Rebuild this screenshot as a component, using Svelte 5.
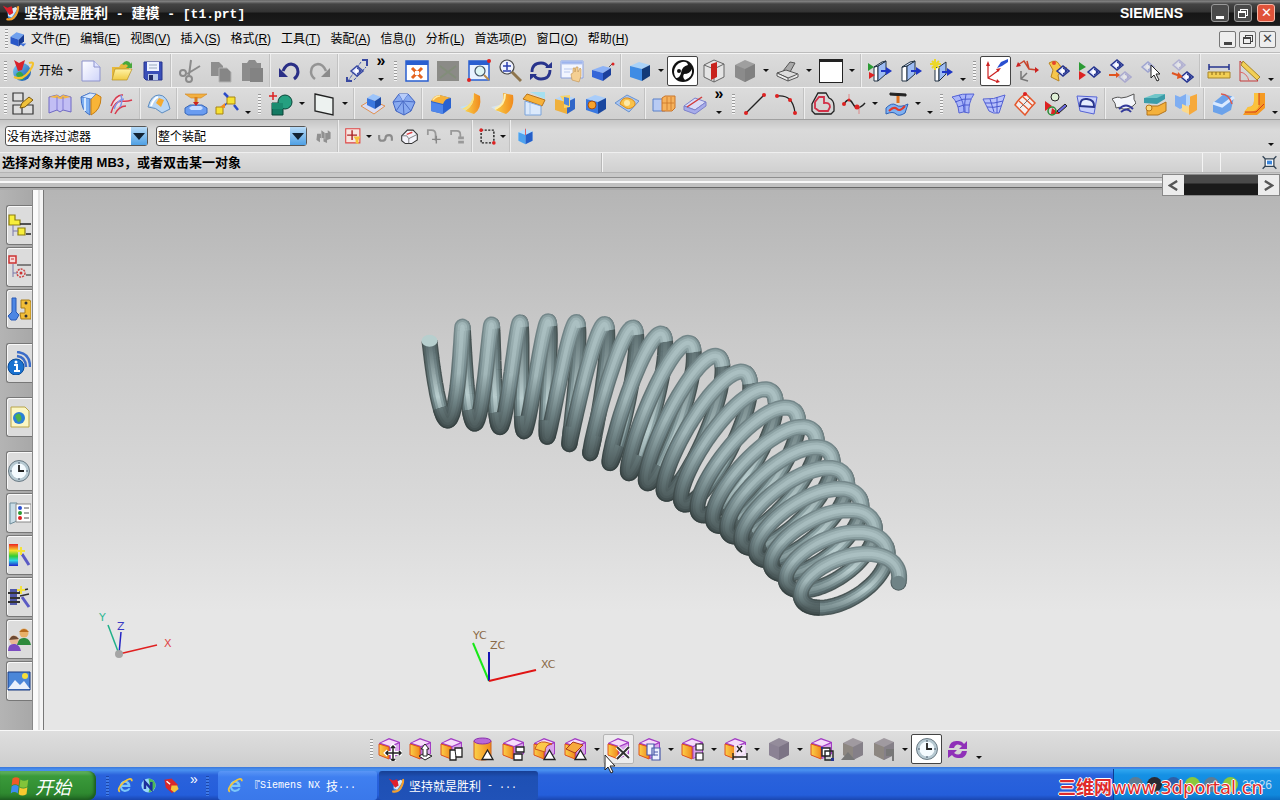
<script>
    const menus = [
        ["文件", "F"], ["编辑", "E"], ["视图", "V"], ["插入", "S"],
        ["格式", "R"], ["工具", "T"], ["装配", "A"], ["信息", "I"],
        ["分析", "L"], ["首选项", "P"], ["窗口", "O"], ["帮助", "H"],
    ];

    // ":" grip, "|" separator, "v" drop-down, "_" toolbar options, ">>" overflow, "*" pressed, "+" hovered
    const standardBar =
        "new open save | cut copy paste | undo redo | touch >> : fit grayfit zoomwin zoom rotate pan persp | cube v *shade section graycube v edges v white v | planein plane planenew _ : *wcs orient wcsdyn wcsplay wcsmove wcspick wcsset | ruler angle _".split(" ");
    const featureBar =
        ": sketch | extrude revolve sweep | patch | stamp assoc _ : combine v datum v | pad ball | block blendA blendB chamfer pocket hole boss | unite trim >> : line arc | offset spline v project v _ : mesh grid xmesh bridge nside | cloth layers fold | face bend _".split(" ");
    const selectBar = "gear | snap v loop body turn branch | marquee v | bluebox".split(" ");
    const syncBar =
        ": smove spull soffset scyl spattern sblend schamfer v +sdelete scopy v sgroup v sdim v sgray v sbox sgrayA sgrayB v *clock refresh _".split(" ");

    const sideTabs = [
        ["asmnav"], ["connav"], ["reuse"], ["web", true], ["internet", true],
        ["clock", true], ["material"], ["process"], ["machine"], ["roles"], ["scene"],
    ];

    const box = (t, l, r, line = "none") =>
        `<g stroke="${line}" stroke-width=".8" stroke-linejoin="round"><path d="M2 7 11 3 22 6 14 10z" fill="${t}"/><path d="M2 7 14 10V22L2 18z" fill="${l}"/><path d="M14 10 22 6V17L14 22z" fill="${r}"/></g>`;
    const hex = (t, l, r) =>
        `<path d="M12 1 22 5V18L12 23 2 18V6z" fill="${t}"/><path d="M2 6 12 10V23L2 18z" fill="${l}"/><path d="M12 10 22 5V18L12 23z" fill="${r}"/>`;
    const sync = (extra) =>
        `<path d="M1 6 11 1 22 5V17L12 22 1 18z" fill="#a23cc4"/><path d="M3 6 11 2.500 20 5.500 12 9z" fill="#f6dcfa"/><path d="M1 7 11 10V22L1 18z" fill="url(#orange)" stroke="#e0541c"/><path d="M12.500 10 21 6.500V16.500L12.500 21z" fill="#d9a4ea"/>${extra}`;
    const diamond = (x, y, c = "#26358f") =>
        `<path d="M${x - 6} ${y}l6-5 6 5-6 5z" fill="#dfe5ff" stroke="${c}" stroke-width="1.5"/><path d="M${x} ${y - 4}l5 4-5 4z" fill="${c}"/><circle cx="${x}" cy="${y}" r="2" fill="#fff"/>`;
    const tri = `<path d="M11 22.500 16.500 13 22 22.500z" fill="#fff" stroke="#222" stroke-width="1.300"/>`;
    const globe =
        `<circle cx="11" cy="13" r="9" fill="url(#sky)"/><path d="M5 15q4-5 7 0t-1 6q-5-1-6-6z" fill="#34a54b"/><path d="M3 1l5 3 6-3-3 10-4 1z" fill="#d8222c"/><path d="M3 18q10 5 18-10 3-6-3-4" fill="none" stroke="#f4c22d" stroke-width="2.200"/>`;
    const ie =
        `<path d="M19 14H7q1 4 5 4 3 0 4-2h3q-2 5-8 5-7-1-7-8t8-8q7 1 7 9zM7 11h8q-1-3-4-3t-4 3z" fill="#7cc6fa"/><path d="M4 21Q-1 17 10 7 21-1 21 6" fill="none" stroke="#f2c53c" stroke-width="2.500"/>`;

    const icons = {
        nx: globe,
        nxlogo: `<path d="M7 9l14-3q1 8-4 13-5 4-9-1z" fill="#3b8fe0"/><path d="M9 8l9-4 3 2-8 12-5-2z" fill="#d8ecfa"/><path d="M1 2l6 3 6-2 2 9-5 3z" fill="#e0202c"/><path d="M6 20q9 3 14-9 2-5 1-8" fill="none" stroke="#f5a02d" stroke-width="3"/>`,
        mdi: `<path d="M2 9l8-6 10 3-7 7z" fill="#6fa0ee"/><path d="M2 9l11 4v9L2 18z" fill="#2a58c8"/><path d="M13 13l7-7v9l-7 7z" fill="#173a94"/><path d="M14 18h9l-4 4z" fill="#3e70da"/>`,
        new: `<path d="M3 2h12l6 6v14H3z" fill="url(#page)" stroke="#8d93cc"/><path d="M15 2v6h6" fill="#dfe3ff" stroke="#8d93cc"/>`,
        open: `<path d="M2 8h7l2-3h8v5H6L2 20z" fill="#e7b93c"/><path d="M5 10h17l-5 11H2z" fill="url(#folder)" stroke="#b58f23" stroke-width=".7"/><path d="M12 5q5-6 9 0l1-2v6h-6l2-2q-2-3-4-1z" fill="#48a83c"/>`,
        save: `<path d="M3 3h18v18H5l-2-2z" fill="#3a4fb8" stroke="#26348f"/><path d="M6 3h12v9H6z" fill="#eef3ff"/><path d="M8 6h8M8 9h8" stroke="#9ab"/><path d="M7 15h10v6H7z" fill="#b8c8e8"/><path d="M8 16h4v5H8z" fill="#222c66"/>`,
        cut: `<path d="M13 1 11 16M22 7 9 15" stroke="#8b8b8b" stroke-width="2" fill="none"/><circle cx="5" cy="14" r="3" fill="none" stroke="#8b8b8b" stroke-width="2"/><circle cx="11" cy="20" r="3" fill="none" stroke="#8b8b8b" stroke-width="2"/>`,
        copy: `<path d="M2 3h8l4 4v10H2z" fill="#8e8e8e"/><path d="M10 9h8l4 4v10H10z" fill="#868686" stroke="#b4b4b4"/>`,
        paste: `<path d="M2 4h5l2-3h6l2 3h4v18H2z" fill="#8c8c8c"/><path d="M10 9h13v14H10z" fill="#838383"/>`,
        undo: `<path d="M6 12Q9 5 14 5q7 1 7 8 0 4-4 7" fill="none" stroke="#2a2f86" stroke-width="3"/><path d="M2 9v9h9z" fill="#2a2f86"/>`,
        redo: `<path d="M18 12Q15 5 10 5 3 6 3 13q0 4 4 7" fill="none" stroke="#949494" stroke-width="2.500"/><path d="M22 9v9h-9z" fill="#8a8a8a"/>`,
        touch: `<path d="M3 22 16 3M9 21 21 8" stroke="#4058b0" stroke-dasharray="3 1"/>${diamond(12, 12, "#3949a0")}<path d="M17 1h5v6M2 18v4h5" stroke="#3949a0" stroke-width="2" fill="none"/>`,
        fit: `<path d="M1 2h22v20H1z" fill="#fff" stroke="#2a5fd0" stroke-width="1.500"/><path d="M1 2h22v4H1z" fill="#2a5fd0"/><path d="M7 9l10 10M17 9 7 19" stroke="#e5641e" stroke-width="3"/><path d="M10 12h4v4h-4z" fill="#fff"/>`,
        grayfit: `<path d="M1 2h22v20H1z" fill="#8b8b87"/><path d="M4 7l16 12M20 7 4 19" stroke="#828d7a" stroke-width="2"/>`,
        zoomwin: `<path d="M2 2h20v19H2z" fill="#e9f2ff" stroke="#2a5fd0" stroke-width="1.500"/><path d="M2 2h20v4H2z" fill="#2a5fd0"/><circle cx="13" cy="12" r="5" fill="#dff6f4" stroke="#456" stroke-width="1.200"/><path d="M17 16l5 5" stroke="#b98b4a" stroke-width="2"/><circle cx="22" cy="2" r="2" fill="#d22"/><circle cx="2" cy="21" r="2" fill="#d22"/>`,
        zoom: `<circle cx="9" cy="8" r="7" fill="#eef2ff" stroke="#444" stroke-width="1.200"/><path d="M5 7h8M9 3v8M5 12h8" stroke="#2b3fb0" stroke-width="1.500"/><path d="M14 13l9 9" stroke="#8d744c" stroke-width="3"/>`,
        rotate: `<path d="M3 13Q3 4 12 4q5 0 7 4M21 11q0 9-9 9-5 0-7-4" fill="none" stroke="#28348c" stroke-width="2.800"/><path d="M16 9h7V3zM8 15H1v6z" fill="#28348c"/>`,
        pan: `<path d="M1 2h22v17H1z" fill="#f2f5ff" stroke="#8ba0dc"/><path d="M1 2h22v3H1zM4 10h8M4 13h6" fill="#9db4ee" stroke="#b9c8ee"/><path d="M12 21l-1-6 2-1V9h2v4l1-5h2v5l2-4 1 1v7l-2 6z" fill="#f4cf93" stroke="#c1904e" stroke-width=".6"/>`,
        persp: `<path d="M1 11l11-4 8 2-8 5z" fill="#8db2f6"/><path d="M1 11l11 3v8L1 18z" fill="#3566d8"/><path d="M12 14l8-5v7l-8 6z" fill="#1b3f9c"/><path d="M18 8l3-3" stroke="#555"/><circle cx="22" cy="5" r="1.500" fill="#d22"/>`,
        cube: box("#a9d2f8", "#3f8ce4", "#123a78"),
        shade: `<circle cx="12" cy="12" r="11" fill="#111"/><path d="M11 3q5-1 6 3-6 1-7 8-1 5-5 5-4-6 0-12 2-3 6-4z" fill="#fff"/><path d="M13 15q6 0 8-5 1 8-7 11-3-3-1-6z" fill="#fff"/><circle cx="8" cy="12" r="2" fill="#111"/>`,
        section: `<path d="M12 1 22 5V18L12 23 2 18V6z" fill="#e4e4e4" stroke="#666"/><path d="M2 6l10 4 10-5M12 10v13" stroke="#666" fill="none"/><path d="M9 5l6-2v15l-6 3z" fill="#c8221c"/>`,
        graycube: hex("#9f9f9f", "#8b8b8b", "#808080"),
        edges: `<path d="M7 12 14 3l5 1-5 9z" fill="#a9a9a9" stroke="#555"/><path d="M1 14l9-3 12 4-10 4z" fill="#ddd" stroke="#555"/><path d="M1 14v3l11 5v-3zM22 15v3l-10 4" fill="#eee" stroke="#555"/>`,
        plane: `<path d="M3 8l5-1v15H3z" fill="#fff" stroke="#234"/><path d="M8 7l8-5v13l-8 7z" fill="#9dbcf4" stroke="#234"/><path d="M3 8l8-5 5-1-8 5z" fill="#d8e6ff" stroke="#234"/><path d="M12 12h7" stroke="#1d35c4" stroke-width="2"/><path d="M17 8l6 4-6 4z" fill="#1d35c4"/>`,
        planein: `<path d="M6 8l4-1v15H6z" fill="#fff" stroke="#234"/><path d="M10 7l8-5v13l-8 7z" fill="#9dbcf4" stroke="#234"/><path d="M6 8l8-5 4-1-8 5z" fill="#d8e6ff" stroke="#234"/><path d="M13 12h6" stroke="#1d35c4" stroke-width="2"/><path d="M18 8l6 4-6 4z" fill="#1d35c4"/><path d="M0 4l6 4-6 4z" fill="#2b9a34"/><path d="M1 13l6 3-6 4z" fill="#d22"/>`,
        planenew: `<path d="M5 9l4-1v14H5z" fill="#fff" stroke="#234"/><path d="M9 8l7-5v12l-7 7z" fill="#9dbcf4" stroke="#234"/><path d="M12 13h7" stroke="#1d35c4" stroke-width="2"/><path d="M17 9l6 4-6 4z" fill="#1d35c4"/><path d="M5 0v11M0 5h11M2 2l7 7M9 2 2 9" stroke="#ecd829" stroke-width="2"/>`,
        wcs: `<path d="M4 5v14l10 4M4 19l11-8" fill="none" stroke="#c22" stroke-width="1.200"/><path d="M2 7l2-5 2 5zM12 10l5-1-3 4zM12 24l4-1-3-3z" fill="#c22"/><path d="M13 9l4-6 7-3v3l-6 4z" fill="#2a4fd0"/>`,
        orient: `<path d="M3 6l6-4 5 8 8 1M12 2l2 8" fill="none" stroke="#c8442c" stroke-width="1.500"/><path d="M1 8l2-5 3 4zM20 8l4 3-4 3z" fill="#c22"/><path d="M6 12v8l7 2M6 20l6-6" stroke="#777" fill="none" stroke-width="1.500"/>`,
        wcsdyn: `<path d="M3 4q8-5 11 3l7 2-9 7 1 6-8-4 2-7z" fill="#f6c64b" stroke="#b98421"/>${diamond(17, 12)}<circle cx="8" cy="4" r="2" fill="#e6452c"/>`,
        wcsplay: `<path d="M2 3l7 5-7 4z" fill="#2b9a34"/><path d="M2 12l7 4-7 5z" fill="#d22"/>${diamond(17, 13)}`,
        wcsmove: `${diamond(9, 6)}<g opacity=".45">${diamond(17, 18, "#7a78c8")}</g><path d="M1 16h8" stroke="#e05420" stroke-width="2"/><path d="M8 13l4 3-4 3z" fill="#e05420"/>`,
        wcspick: `<g opacity=".45">${diamond(9, 8, "#5a68c8")}</g><path d="M12 6v13l3-3 3 6 2-1-3-6h4z" fill="#fff" stroke="#222"/>`,
        wcsset: `<g opacity=".4">${diamond(9, 6, "#7a78c8")}</g>${diamond(17, 18)}<path d="M2 14l8 3" stroke="#e05420" stroke-width="2"/><path d="M8 13l5 5-6 2z" fill="#e05420"/>`,
        ruler: `<path d="M1 13h22v6H1z" fill="#f2cf55" stroke="#a8862a"/><path d="M2 5v6M22 5v6M2 8h20" stroke="#26348f" stroke-width="1.500"/><path d="M5 13v3M9 13v3M13 13v3M17 13v3" stroke="#86671a"/>`,
        angle: `<path d="M2 2v20h18z" fill="none" stroke="#c23a3a"/><path d="M5 2l17 16-3 3L3 6z" fill="#f2cf55" stroke="#a8862a"/><path d="M2 13q7 1 9 9" fill="none" stroke="#d66"/>`,
        sketch: `<path d="M2 1h10v8H2zM2 13h9v9H2zM11 13h11v9H11z" fill="#dedede" stroke="#333" stroke-width="1.200"/><path d="M9 16l2-5 7-6 4 3-8 7z" fill="#f0c13a" stroke="#7c5a10"/>`,
        extrude: `<path d="M1 5l8-2 3 2 3-2 8 2v15l-8-2-3 2-3-2-8 3z" fill="#c2bef4" stroke="#6e68c4"/><path d="M1 5l8-2 3 2 3-2 8 2-9 2z" fill="#f3b744"/><path d="M9 5v13M15 5v13" stroke="#817bd4"/>`,
        revolve: `<path d="M2 5l9-4v22Q2 19 2 5z" fill="#7eb0f2" stroke="#3c6dc4"/><path d="M12 5l5-3 5 3q0 13-10 18z" fill="#f8b437" stroke="#c67d14"/><path d="M2 5l9-4 6 1-5 5z" fill="#d6e8ff" stroke="#3c6dc4" stroke-width=".7"/><path d="M6 6v13" stroke="#d6e8ff" stroke-width="2"/>`,
        sweep: `<path d="M1 21Q3 7 10 4q3 5 12 4-8 2-10 5-7 1-11 8z" fill="#f3dce6"/><path d="M1 14Q6 2 13 3M1 21Q4 9 12 9q4 1 10-1M5 22q4-8 11-8" fill="none" stroke="#d8394d" stroke-width="1.500"/><path d="M4 17q3-9 10-10M11 3q2 7-1 12" stroke="#7f96e8" fill="none" stroke-width="1.500"/>`,
        patch: `<path d="M1 15Q4 3 12 3t11 14l-8 4q-6-6-14-6z" fill="#b9d6f4" stroke="#5d8cc0"/><path d="M9 11l3-5 5 2-3 7z" fill="#f4a92f"/><path d="M4 14q3-8 7-9" stroke="#fff" fill="none" stroke-width="2"/>`,
        stamp: `<path d="M1 2h22l-6 4H7z" fill="#f3b040" stroke="#cf8420" stroke-width=".6"/><path d="M12 5v7" stroke="#d97f1c" stroke-width="3"/><path d="M1 16l5-3h12l5 3v5l-4 2H4l-3-2z" fill="#6a9cf0" stroke="#3766b8"/><path d="M5 16l3-2h9l2 2-2 2H7z" fill="#c6dcff"/><path d="M9 10l3 4 3-4z" fill="#c22"/>`,
        assoc: `<path d="M5 18 16 7" stroke="#2c4cc8" stroke-width="1.500" stroke-dasharray="4 2"/><path d="M12 5h8v7h-8zM1 15h7v7H1z" fill="#f7e233" stroke="#a78412"/><path d="M9 1l4 4M19 13l4 5" stroke="#2c4cc8" stroke-width="2.500"/><path d="M5 15l5-4v5z" fill="#f28c1e"/>`,
        combine: `<path d="M3 11h11v12H3z" fill="#147a63" stroke="#0a4437"/><circle cx="16" cy="10" r="7" fill="#25a080" stroke="#0a4437"/><path d="M3 11h11v6H3z" fill="#1b8c70"/><path d="M4 0v8M0 4h8" stroke="#d22" stroke-width="1.500"/>`,
        datum: `<path d="M3 2l18 4v17L3 19z" fill="#edf2f0" stroke="#222" stroke-width="1.300"/>`,
        pad: `<path d="M0 14l10-6 14 6-11 8z" fill="#d9ddf4" stroke="#e09050"/><path d="M6 6l6-4 8 3-6 4z" fill="#9cc4fa"/><path d="M6 6l8 3v8l-8-4z" fill="#3b76de"/><path d="M14 9l6-4v8l-6 4z" fill="#1f4da8"/>`,
        ball: `<path d="M7 2h9l7 8-4 9-7 4-8-4-3-9z" fill="#88aaf0" stroke="#3f62c0"/><path d="M7 2l4 7-7 10M16 2l-5 7 8 10M1 10l10-1 12 1M11 9l1 14" fill="none" stroke="#4a6cc6"/><path d="M7 2h9l-5 7z" fill="#b7ccfa"/>`,
        block: `<path d="M2 9l8-6 12 3v10l-8 6-12-3z" fill="#2a62d0"/><path d="M2 9q3-6 9-6l11 3q-6 0-8 6z" fill="#f7b23a"/><path d="M2 10l12 3v9L2 19z" fill="#4f86ea"/><path d="M4 8q3-4 7-4" stroke="#ffe9a0" stroke-width="1.500" fill="none"/>`,
        blendA: `<path d="M0 15l8-2 9 4-8 4z" fill="#bfe0f8"/><path d="M14 1l6 3q2 13-6 18l-9-3Q15 13 14 1z" fill="url(#orange)"/><path d="M14 1q1 12-8 17l-4-1Q13 12 14 1z" fill="#fbe07a"/>`,
        blendB: `<path d="M0 15l8-2 9 4-8 4z" fill="#d6e4f0"/><path d="M12 1l10 2q2 13-7 19l-11-4Q14 14 12 1z" fill="url(#orange)"/><path d="M4 17q10-4 10-15" stroke="#fff0b0" stroke-width="2" fill="none"/>`,
        chamfer: `<path d="M8 0h15v7z" fill="#a6e0ef"/><path d="M1 7l4-5 18 6-3 6z" fill="#f7b23a" stroke="#b8741a"/><path d="M3 9l16 5v9H3z" fill="#dbe9fb" stroke="#7ba3da"/><path d="M8 11v11" stroke="#a9c6ec"/>`,
        pocket: box("#b5d6fa", "#efb03c", "#3166c8") + `<path d="M7 4l4 6v6l6-1V3z" fill="#f9d368"/><path d="M11 5l5 1v8l-5-2z" fill="#4f86dc"/>`,
        hole: box("#a9cdfa", "#3978e0", "#1a479f") + `<circle cx="8" cy="13" r="4" fill="#f7a32c" stroke="#a84f10"/>`,
        boss: `<path d="M0 11l12-8 12 6-10 11z" fill="#a9c6f2" stroke="#6992d0"/><path d="M5 12q2-7 8-6 8 2 7 7-4 5-9 3z" fill="#f9c24a" stroke="#d98a1c"/><circle cx="12" cy="11" r="3" fill="#fde9a8"/>`,
        unite: `<path d="M1 7h12v12H1z" fill="#b8cbf4" stroke="#5b80c8"/><path d="M10 6l3-2h10v12l-3 3H10z" fill="#f6b25c" stroke="#c9752a"/><path d="M15 5v13M10 11h12M19 5v13" stroke="#c9752a" stroke-width=".8"/>`,
        trim: `<path d="M1 14l11-8 11 4-11 8z" fill="#dadcf6" stroke="#7d82cc"/><path d="M1 14v4l11 4 11-8v-4l-11 8z" fill="#a7acea" stroke="#7d82cc"/><path d="M4 15 19 5" stroke="#d23b3b" stroke-width="1.500"/>`,
        line: `<path d="M3 21 21 3" stroke="#222" stroke-width="1.300"/><circle cx="3" cy="21" r="2" fill="#d22"/><circle cx="21" cy="3" r="2" fill="#d22"/>`,
        arc: `<path d="M3 4q16-2 18 17" fill="none" stroke="#222" stroke-width="1.300"/><circle cx="3" cy="4" r="2" fill="#d22"/><circle cx="16" cy="8" r="2" fill="#d22"/><circle cx="21" cy="21" r="2" fill="#d22"/>`,
        offset: `<path d="M7 1h8l3 5q5 2 5 8v5l-3 3H4l-3-3v-7z" fill="none" stroke="#222" stroke-width="1.300"/><path d="M8 5h5v6q6-1 6 4l-2 4H8l-4-3v-6z" fill="none" stroke="#d23048" stroke-width="1.800"/>`,
        spline: `<path d="M2 12q5-8 9 0t12-1" fill="none" stroke="#222" stroke-width="1.500"/><path d="M7 2v6M17 14v8" stroke="#d88"/><circle cx="2" cy="12" r="2" fill="#d22"/><circle cx="15" cy="15" r="2.500" fill="#d22"/><circle cx="7" cy="8" r="1.500" fill="#d22"/>`,
        project: `<path d="M5 1l16 1v2L5 3z" fill="#222" stroke="#222"/><path d="M13 4v7" stroke="#e0701e" stroke-width="3"/><path d="M1 16q6-6 10-3t12-1l-3 9q-6 4-9 1t-10 0z" fill="#7fb0f0" stroke="#2d62b8"/><path d="M4 19q5-5 8-2t8-3" stroke="#e03a2c" fill="none" stroke-width="2"/>`,
        mesh: `<path d="M1 5q10-4 22-3-6 9-5 19-6-2-10 0-1-11-7-16z" fill="#a9b5fa" stroke="#5563d4"/><path d="M4 10q8-4 16-3M7 15q6-3 11-2M8 3q5 7 5 17M15 2q-2 9-1 18" fill="none" stroke="#4a59d0"/>`,
        grid: `<path d="M1 7q10 1 22-4l-6 18q-6 1-10-2z" fill="#b9c2fb" stroke="#5563d4"/><path d="M3 11q9 1 18-2M5 15q7 1 14-1M8 7l4 13M15 5v16" fill="none" stroke="#4a59d0"/>`,
        xmesh: `<path d="M2 13q5-8 11-11l9 9q-5 5-10 12z" fill="#f4eeee" stroke="#e4572c" stroke-width="1.500"/><path d="M6 9l10 9M10 5l10 9" stroke="#e4572c" stroke-width="1.200"/><path d="M7 16 17 6" stroke="#777"/><circle cx="12" cy="2" r="2" fill="#d22"/>`,
        bridge: `<circle cx="11" cy="5" r="4" fill="#dff0d6" stroke="#222"/><path d="M1 9l7 5-7 5zM8 16l8 6H7z" fill="#d22"/><circle cx="8" cy="19" r="4" fill="none" stroke="#2b8a34" stroke-width="1.500"/><path d="M13 19l8-7 2 2-8 7z" fill="#6a6ae0" stroke="#222"/>`,
        nside: `<path d="M2 4l20 1-3 17-14-3z" fill="#c7cffb" stroke="#5563d4"/><path d="M5 14q0-8 7-7 8 1 7 8z" fill="#e6edff" stroke="#28348c" stroke-width="2"/>`,
        cloth: `<path d="M0 7q6-3 9-1 5 0 13-4-1 6 2 9-6 7-13 6-4-3-7-1 0-5-4-9z" fill="#f4f6fa" stroke="#555"/><path d="M7 17q7-7 14 0M9 20q6-5 10 0" fill="none" stroke="#333a9a" stroke-width="2"/>`,
        layers: `<path d="M1 6l11-4h10l-8 5z" fill="#6fc5c8"/><path d="M1 6h13l8-4v5l-8 5-13-1z" fill="#3b9ca8"/><path d="M4 14h11l8-4v9l-8 4H4z" fill="#f4b13c" stroke="#b4741a"/><circle cx="6" cy="16" r="3" fill="#f9d77c" stroke="#b4741a"/>`,
        fold: `<path d="M1 3l5 2 6-3v12l-6 3-5-3z" fill="#7faef2"/><path d="M8 12l7 3v7l-7-3z" fill="#fbd98c"/><path d="M15 15V5l8-3v16l-8 5z" fill="#f6a93b"/><path d="M12 2l4 2v9l-4 1z" fill="#b7d6fa"/>`,
        face: `<path d="M2 11 13 2l10 3-3 13-9 5-9-3z" fill="#6ba2ea"/><path d="M2 11l9 3 12-9" stroke="#d8e9ff" fill="none" stroke-width="3"/><path d="M10 2q8 0 11 10" fill="none" stroke="#de5a4c" stroke-width="1.500"/>`,
        bend: `<path d="M12 1h11v15l-8 7H1l5-8q6 0 6-6z" fill="#f59a23"/><path d="M12 1h5v12q-1 6-9 7H2l4-5q6 0 6-6z" fill="#fbc23c"/><path d="M3 20h11l8-8M17 1v12" stroke="#d23a1c" fill="none"/>`,
        gear: `<path d="M3 8h6V3l5 4h4V3l4 3v9l-5 2v4l-5-2v-5H7v6l-5-3z" fill="#909090"/><path d="M9 8v8M14 7v9" stroke="#c8c8c8"/>`,
        snap: `<path d="M1 1h20v20H1z" fill="#f7e5e0" stroke="#d44" stroke-width="1.500"/><path d="M10 3v14M3 10h14" stroke="#a22" stroke-width="2"/><path d="M12 12h10l-3 5v6l-4-2v-4z" fill="#f4c23c"/>`,
        loop: `<path d="M3 10v4q0 4 4 4 5 0 5-4t5-4q4 0 4 4v4" fill="none" stroke="#8b8b8b" stroke-width="3"/>`,
        body: `<path d="M1 11l8-8h8l6 6v8l-8 5H6l-5-4z" fill="#f3f3fa" stroke="#333" stroke-width="1.500"/><path d="M1 11h7l3 4 12-6M11 15v7" fill="none" stroke="#555"/><path d="M8 9l8-3" stroke="#d44" stroke-width="2"/>`,
        turn: `<path d="M4 10V3h5q6 0 6 6v9" fill="none" stroke="#999" stroke-width="2.500"/><path d="M10 16h12M16 11v11" stroke="#888" stroke-width="2"/>`,
        branch: `<path d="M3 10V4h8q5 0 5 5v4" fill="none" stroke="#999" stroke-width="2.500"/><path d="M13 12h8v4h-8zM13 18h8v4h-8z" fill="#999"/>`,
        marquee: `<path d="M3 3h18v18H3z" fill="none" stroke="#222" stroke-width="2" stroke-dasharray="3 2"/><circle cx="3" cy="3" r="2.500" fill="#d22"/><circle cx="21" cy="21" r="2.500" fill="#d22"/>`,
        bluebox: hex("#b9defb", "#4da2ee", "#245ec8") + `<path d="M12 1v9" stroke="#d66" stroke-width="1.500"/>`,
        smove: sync(`<path d="M15 9v15M8 16h15M13 11l2-2 2 2M13 22l2 2 2-2M10 14l-2 2 2 2M21 14l2 2-2 2" stroke="#fff" stroke-width="4" fill="none"/><path d="M15 9v15M8 16h15M13 11l2-2 2 2M13 22l2 2 2-2M10 14l-2 2 2 2M21 14l2 2-2 2" stroke="#222" stroke-width="1.500" fill="none"/>`),
        spull: sync(`<path d="M10 19l6-3 7 3-7 4z" fill="#fff" stroke="#222"/><path d="M16 7l4 5h-2v7h-4v-7h-2z" fill="#fff" stroke="#222"/>`),
        soffset: sync(`<path d="M10 13h5v-2h7v9h-6v3h-6z" fill="#fff" stroke="#222" stroke-width="1.300"/><path d="M15 13l1 7" stroke="#222"/>`),
        scyl: `<path d="M3 4v16q0 3 8 3t9-3V4z" fill="url(#orange)" stroke="#cf641c"/><ellipse cx="11.500" cy="4" rx="8.500" ry="3" fill="#b869d8" stroke="#8a2fae"/>${tri}`,
        spattern: sync(`<path d="M14 10h8v5h-8zM12 17h8v6h-8z" fill="#fff" stroke="#222" stroke-width="1.300"/>`),
        sblend: sync(`<path d="M2 12q2-8 10-7l7 2q-7 0-7 8z" fill="#fbc84a" stroke="#c8561c"/>` + tri),
        schamfer: sync(`<path d="M2 12l7-7 10 3-8 8z" fill="#f6a93b" stroke="#a83a1c"/>` + tri),
        sdelete: sync(`<path d="M10 10l12 11M22 10 10 22" stroke="#fff" stroke-width="4"/><path d="M10 10l12 11M22 10 10 22" stroke="#333" stroke-width="2"/>`),
        scopy: sync(`<path d="M9 7h7v11H9zM14 11h8v12h-8z" fill="#eef2ff" stroke="#4a59a8" stroke-width="1.200"/><path d="M16 15h4M16 18h4" stroke="#4a59a8"/>`),
        sgroup: sync(`<path d="M15 7h7v6h-7zM15 16h7v7h-7z" fill="#fff" stroke="#222" stroke-width="1.200"/>`),
        sdim: sync(`<path d="M10 8h12v15H10z" fill="#fff" opacity=".75"/><path d="M13 9l5 6M18 9l-5 6M9 16v7M23 16v7M9 20h14" stroke="#222" stroke-width="1.300"/>`),
        sgray: hex("#948c9b", "#8b8294", "#7c7485"),
        sbox: sync(`<path d="M12 11h8v8h-8z" fill="#fff" stroke="#222" stroke-width="1.400"/><path d="M15 14h8v9h-8z" fill="none" stroke="#222" stroke-width="1.400"/><path d="M11 10h2v2h-2zM21 21h3v3h-3z" fill="#26348f"/>`),
        sgrayA: hex("#a09aa0", "#8d8781", "#858088") + `<path d="M0 23l7-8 7 8z" fill="#777"/>`,
        sgrayB: hex("#a09aa0", "#8d8781", "#858088") + `<path d="M14 12h8v12h-2v-5h-6z" fill="#777"/>`,
        clock: `<circle cx="12" cy="12" r="10.500" fill="#b6c9d2" stroke="#6a7a84"/><circle cx="12" cy="12" r="7.500" fill="#f4fbff"/><path d="M12 6v6h5" fill="none" stroke="#222" stroke-width="1.800"/><path d="M12 3v2M12 19v2M3 12h2M19 12h2" stroke="#456"/>`,
        refresh: `<path d="M3 11Q4 3 12 4q4 0 6 3l3-3v8h-8l3-3q-6-4-8 2zM21 14q-1 8-9 7-4 0-6-3l-4 3v-8h9l-3 3q6 4 8-2z" fill="#8f30b8"/>`,
        asmnav: `<path d="M2 2h6v5h5v5H2zM11 15h7v7h-7z" fill="#f7ee3a" stroke="#8c7d10" stroke-width="1.200"/><path d="M6 12v11M6 18h5" stroke="#7a78a8" fill="none"/><path d="M13 11h11M19 21h5" stroke="#222" stroke-width="1.500"/>`,
        connav: `<path d="M2 1h7v7H2z" fill="#f7dada" stroke="#c33" stroke-width="1.500"/><path d="M4 4h3" stroke="#c33"/><circle cx="14" cy="18" r="4" fill="none" stroke="#c44" stroke-width="1.500" stroke-dasharray="2 1"/><circle cx="14" cy="18" r="1.500" fill="#c33"/><path d="M6 9v13M6 18h4" stroke="#7a78a8"/><path d="M10 10h14M19 20h5" stroke="#222" stroke-width="1.200"/>`,
        reuse: `<path d="M5 1h4v14l3 3-3 5H4l-3-4 4-4z" fill="#4c86e4" stroke="#2858b4"/><path d="M14 3h8q2 0 2 3v16H14l-1-6h5v-5h-4z" fill="#f2be38" stroke="#a87c18"/><circle cx="19" cy="6" r="1.500" fill="#333"/><circle cx="19" cy="19" r="1.500" fill="#333"/>`,
        web: `<circle cx="9" cy="16" r="8" fill="#1a72d0" stroke="#0c4a94"/><path d="M7 14h3v5M7 20h6" stroke="#fff" stroke-width="2" fill="none"/><circle cx="9" cy="11" r="1.500" fill="#fff"/><path d="M10 5q9 1 9 11M10 1q13 1 13 15" fill="none" stroke="#3b6cc8" stroke-width="2.500"/>`,
        internet: `<path d="M4 2h14l4 4v16H4z" fill="#fbf6c4" stroke="#b9a54a"/><circle cx="12" cy="13" r="6" fill="#2c7fd8"/><path d="M8 11q4-5 6 0t-3 6z" fill="#4cb24a"/>`,
        material: `<path d="M3 2h7v18l-7 3z" fill="#c9dce6" stroke="#6e8c9a"/><path d="M9 3h15v18H9z" fill="#fff" stroke="#888"/><circle cx="13" cy="7" r="2" fill="#2a4fd0"/><circle cx="13" cy="12" r="2" fill="#2b9a34"/><circle cx="13" cy="17" r="2" fill="#d22"/><path d="M17 7h5M17 12h5M17 17h5" stroke="#555"/>`,
        process: `<path d="M2 1h9v22H2z" fill="url(#rainbow)"/><path d="M15 11l7 11" stroke="#5a5ac4" stroke-width="3"/><path d="M14 4v8M10 8h8" stroke="#f4e33a" stroke-width="2"/>`,
        machine: `<path d="M3 4h7v16H3z" fill="#5058a8"/><path d="M1 8h13M3 13h10M1 17h12" stroke="#333" stroke-width="2"/><path d="M15 12l7 10" stroke="#5a5ac4" stroke-width="3"/><path d="M12 6l9-2M13 11l9-2" stroke="#333" stroke-width="1.500"/><path d="M14 1v8M10 5h8" stroke="#f4e33a" stroke-width="2"/>`,
        roles: `<circle cx="17" cy="6" r="4.500" fill="#e8b068"/><path d="M10 18q1-8 8-7 5 1 6 7z" fill="#2e8a3c"/><path d="M12 5q5-6 10 0z" fill="#b56a1e"/><circle cx="7" cy="13" r="4.500" fill="#e9b894"/><path d="M1 24q0-8 7-7 5 1 6 7z" fill="#7b4cc0"/><path d="M2 13q4-8 10-1z" fill="#6c4a33"/>`,
        scene: `<path d="M1 3h22v18H1z" fill="#4a86d8" stroke="#1b3a80"/><path d="M1 20l7-9 5 5 4-4 6 8z" fill="#e8f0fb"/><circle cx="18" cy="7" r="3" fill="#f6df3a"/>`,
        winflag: `<path d="M4 4q4-3 8 0l-1 8q-4-3-8 0z" fill="#ef5a28"/><path d="M13 5q4 3 9 0l-1 8q-5 3-9 0z" fill="#82c43a"/><path d="M3 13q4-3 8 0l-1 8q-4-3-8 0z" fill="#3c8df0"/><path d="M12 14q4 3 9 0l-1 8q-5 3-9 0z" fill="#f8c92f"/>`,
        ie,
        media: `<circle cx="12" cy="12" r="10" fill="#9ad8fa"/><path d="M12 2a10 10 0 0 1 10 10q-2 9-10 10l2-8z" fill="#4cb85a"/><path d="M7 17V7l9 10V7" fill="none" stroke="#1c2f9c" stroke-width="3.500"/>`,
        cards: `<path d="M2 4l10-2 9 9-8 12-9-8z" fill="#d8282c"/><path d="M12 12h8l2 5-6 5-5-4z" fill="#f2c53c"/><path d="M5 6l5 4" stroke="#fff" stroke-width="2"/>`,
        fullscreen: `<path d="M5 6h14v12H5z" fill="#fff" stroke="#345" stroke-width="2"/><path d="M8 9h8v6H8z" fill="#3b86dc"/><path d="M1 2l4 4M23 2l-4 4M1 22l4-4M23 22l-4-4" stroke="#345" stroke-width="2"/>`,
    };

    // [turn, centre x, centre y, radius, tilt in degrees, foreshortening]
    const keys = [
        [-1, 420, 375, 46, -2, -0.12],
        [0, 455, 374, 47, 0, -0.08],
        [4, 561, 380, 59, 8, 0.02],
        [8, 658, 408, 72, 20, 0.15],
        [12, 746, 461, 70, 37, 0.31],
        [16, 808, 525, 58, 54, 0.43],
        [19, 850, 583, 49, 66, 0.54],
        [20, 862, 603, 46, 69, 0.56],
    ];

    function at(s, col) {
        let i = 1;
        while (i < keys.length - 2 && keys[i + 1][0] < s) i++;
        if (s < keys[1][0]) i = 0;
        const a = keys[i];
        const b = keys[i + 1];
        const before = keys[Math.max(0, i - 1)];
        const after = keys[Math.min(keys.length - 1, i + 2)];
        const span = b[0] - a[0];
        const t = (s - a[0]) / span;
        const slope = (b[col] - a[col]) / span;
        const m0 = (i === 0 ? slope : (b[col] - before[col]) / (b[0] - before[0])) * span;
        const m1 = ((after[col] - a[col]) / (after[0] - a[0])) * span;
        const t2 = t * t;
        const t3 = t2 * t;
        return (
            (2 * t3 - 3 * t2 + 1) * a[col] + (t3 - 2 * t2 + t) * m0 +
            (3 * t2 - 2 * t3) * b[col] + (t3 - t2) * m1
        );
    }

    function point(s) {
        const k = s + 0.25;
        const phi = s * Math.PI * 2;
        const tilt = (at(k, 4) * Math.PI) / 180;
        const u = Math.cos(phi) * at(k, 3);
        const v = Math.sin(phi) * at(k, 3) * at(k, 5);
        const x = at(k, 1) + u * Math.sin(tilt) + v * Math.cos(tilt);
        const y = at(k, 2) - u * Math.cos(tilt) + v * Math.sin(tilt);
        return [x.toFixed(1), y.toFixed(1)];
    }

    function strand(from, to) {
        const points = [];
        for (let n = 0; n <= 40; n++) points.push(point(from + ((to - from) * n) / 40).join(" "));
        return "M" + points.join("L");
    }

    // far halves first, then near halves, each from the left end on;
    // a near half reaches round both tips so that the bends stay in one piece
    const first = -0.88;
    const last = 19.07;
    const coil = [];
    for (let i = 0; i <= 19; i++) {
        coil.push({ side: "far", d: strand(i === 0 ? first : i - 1, i - 0.45) });
    }
    for (let i = 0; i <= 19; i++) {
        coil.push({ side: "near", d: strand(i - 0.62, i === 19 ? last : i + 0.07) });
    }
    const startCap = point(first);
    const endCap = point(last);
</script>

{#snippet icon(name)}
    <svg class="icon" viewBox="0 0 24 24" aria-hidden="true">{@html icons[name]}</svg>
{/snippet}

{#snippet tools(items)}
    {#each items as item}
        {#if item === ":"}
            <span class="grip"></span>
        {:else if item === "|"}
            <span class="sep"></span>
        {:else if item === "v"}
            <button class="drop" aria-label="more"></button>
        {:else if item === "_"}
            <button class="drop low" aria-label="options"></button>
        {:else if item === ">>"}
            <button class="drop low wide" aria-label="overflow"><span>»</span></button>
        {:else if item === "white"}
            <button class="tool" aria-label="background"><span class="swatch"></span></button>
        {:else}
            {@const name = item.replace(/[*+]/, "")}
            <button class="tool" class:pressed={item[0] === "*"} class:hovered={item[0] === "+"} aria-label={name}>
                {@render icon(name)}
            </button>
        {/if}
    {/each}
{/snippet}

<svg class="defs" aria-hidden="true">
    <defs>
        <linearGradient id="orange"><stop stop-color="#fbd04a" /><stop offset="1" stop-color="#f08a1c" /></linearGradient>
        <linearGradient id="page" x2="1" y2="1"><stop stop-color="#fff" /><stop offset="1" stop-color="#cfd4fa" /></linearGradient>
        <linearGradient id="folder" x2="0" y2="1"><stop stop-color="#fff3a6" /><stop offset="1" stop-color="#f0cb45" /></linearGradient>
        <linearGradient id="sky" x2="1" y2="1"><stop stop-color="#7fd0f8" /><stop offset="1" stop-color="#0f4ea8" /></linearGradient>
        <linearGradient id="rainbow" x2="0" y2="1">
            <stop stop-color="#e22" /><stop offset=".3" stop-color="#f6e22c" /><stop offset=".55" stop-color="#3c3" />
            <stop offset=".75" stop-color="#2cd6e6" /><stop offset="1" stop-color="#22c" />
        </linearGradient>
        <linearGradient id="near-edge" x2="0" y2="1"><stop stop-color="#74878a" /><stop offset=".6" stop-color="#5a6a6b" /><stop offset="1" stop-color="#374242" /></linearGradient>
        <linearGradient id="near-body" x2="0" y2="1"><stop stop-color="#8ca1a3" /><stop offset=".6" stop-color="#71868a" /><stop offset="1" stop-color="#435051" /></linearGradient>
        <linearGradient id="near-light" x2="0" y2="1"><stop stop-color="#a0b5b7" /><stop offset=".5" stop-color="#8da2a4" /><stop offset=".8" stop-color="#66787a" /><stop offset="1" stop-color="#4c5a5b" /></linearGradient>
        <linearGradient id="near-shine" x2="0" y2="1"><stop stop-color="#abc0c2" /><stop offset=".5" stop-color="#a2b7b9" /><stop offset=".8" stop-color="#6e8284" /><stop offset="1" stop-color="#526162" /></linearGradient>
        <linearGradient id="far-edge" x2="0" y2="1"><stop stop-color="#465252" /><stop offset="1" stop-color="#4a5757" /></linearGradient>
        <linearGradient id="far-body" x2="0" y2="1"><stop stop-color="#4f5f60" /><stop offset=".7" stop-color="#6b7f81" /><stop offset="1" stop-color="#56676a" /></linearGradient>
        <linearGradient id="far-light" x2="0" y2="1"><stop stop-color="#56676a" /><stop offset=".7" stop-color="#93a9ab" /><stop offset="1" stop-color="#6d8183" /></linearGradient>
        <linearGradient id="far-shine" x2="0" y2="1"><stop stop-color="#5a6c6e" /><stop offset=".7" stop-color="#b9cdce" /><stop offset="1" stop-color="#7d9193" /></linearGradient>
    </defs>
</svg>

<div class="app">
    <header class="titlebar">
        {@render icon("nxlogo")}
        <h1>坚持就是胜利<span>{" - "}</span>建模<span>{" - [t1.prt]"}</span></h1>
        <strong>SIEMENS</strong>
        <div class="winbtns">
            <button class="min" aria-label="minimize"></button>
            <button class="restore" aria-label="restore"><i></i></button>
            <button class="close" aria-label="close">✕</button>
        </div>
    </header>

    <nav class="menubar">
        <span class="grip"></span>
        {@render icon("mdi")}
        {#each menus as [label, key]}
            <button>{label}(<u>{key}</u>)</button>
        {/each}
        <div class="winbtns mdi">
            <button class="min" aria-label="minimize part"></button>
            <button class="restore" aria-label="restore part"><i></i></button>
            <button aria-label="close part">✕</button>
        </div>
    </nav>

    <div class="toolbar">
        <span class="grip first"></span>
        <button class="start-app">{@render icon("nx")}开始<i></i></button>
        {@render tools(standardBar)}
    </div>
    <div class="toolbar second">
        {@render tools(featureBar)}
    </div>

    <div class="selectbar">
        <div class="combo">
            <select aria-label="类型过滤器"><option>没有选择过滤器</option></select>
            <span></span>
        </div>
        <div class="combo">
            <select aria-label="选择范围"><option>整个装配</option></select>
            <span></span>
        </div>
        {@render tools(selectBar)}
        <button class="drop low end" aria-label="options"></button>
    </div>

    <div class="status">
        <p>选择对象并使用 MB3，或者双击某一对象</p>
        <p class="message"></p>
        <span></span>
        <button aria-label="fullscreen">{@render icon("fullscreen")}</button>
    </div>

    <div class="strip">
        <div class="scroller">
            <button aria-label="left"><svg viewBox="0 0 12 12"><path d="M10 1 2 6l8 5" /></svg></button>
            <span></span>
            <button aria-label="right"><svg viewBox="0 0 12 12"><path d="M2 1l8 5-8 5" /></svg></button>
        </div>
    </div>

    <main>
        <aside>
            {#each sideTabs as [name, spaced]}
                <button class:spaced aria-label={name}>{@render icon(name)}</button>
            {/each}
        </aside>
        <div class="divider"></div>
        <div class="view">
            <svg viewBox="44 190 1236 540">
                <circle cx={endCap[0]} cy={endCap[1]} r="8" fill="#4f5e60" />
                <g fill="none" stroke-linejoin="round">
                    {#each coil as { side, d }}
                        <path {d} stroke="url(#{side}-edge)" stroke-width="16" />
                        <path {d} stroke="url(#{side}-body)" stroke-width="13" />
                        <path {d} stroke="url(#{side}-light)" stroke-width="9" />
                        <path {d} stroke="url(#{side}-shine)" stroke-width="4" />
                    {/each}
                </g>
                <ellipse cx={startCap[0]} cy={startCap[1]} rx="8" ry="6" fill="#b7cfce" />
                <circle cx={endCap[0]} cy={endCap[1]} r="7" fill="#6f8386" />

                <g fill="none" stroke-width="1.5">
                    <path d="M119 654 108 625" stroke="#1fb088" />
                    <path d="M119 654 121 632" stroke="#2424c4" />
                    <path d="M119 654 157 645" stroke="#e02020" />
                    <path d="M489 681 473 643" stroke="#18e818" stroke-width="2" />
                    <path d="M489 681V652" stroke="#1414b4" stroke-width="2" />
                    <path d="M489 681 536 670" stroke="#e01414" stroke-width="2" />
                </g>
                <circle cx="119" cy="654" r="4" fill="#a5a5a5" />
                <g class="axis">
                    <text x="99" y="621" fill="#2fb892">Y</text>
                    <text x="117" y="630" fill="#3a3ac4">Z</text>
                    <text x="164" y="647" fill="#e04848">X</text>
                    <text x="473" y="639">YC</text>
                    <text x="490" y="649">ZC</text>
                    <text x="541" y="668">XC</text>
                </g>
            </svg>
        </div>
    </main>

    <div class="syncbar">
        {@render tools(syncBar)}
        <svg class="cursor" viewBox="0 0 12 20" aria-hidden="true">
            <path d="M1 1v15l3-3 3 6 2-1-3-6h5z" fill="#fff" stroke="#222" />
        </svg>
    </div>

    <footer>
        <button class="start">{@render icon("winflag")}开始</button>
        <div class="quick">
            <span class="grip"></span>
            <button aria-label="ie">{@render icon("ie")}</button>
            <button aria-label="media">{@render icon("media")}</button>
            <button aria-label="cards">{@render icon("cards")}</button>
            <b>»</b>
            <span class="grip"></span>
        </div>
        <button class="task">{@render icon("ie")}『<span>{"Siemens NX "}</span>技<span>...</span></button>
        <button class="task active">{@render icon("nxlogo")}坚持就是胜利<span>{" - ..."}</span></button>
        <div class="tray">
            <i class="gray"></i><i class="dark"></i><i></i><i class="green"></i><i class="gray"></i><i class="green"></i>
            <time>20:26</time>
            <div class="watermark">三维网<span>www.3dportal.cn</span></div>
        </div>
    </footer>
</div>

<style>
    :global(body) {
        margin: 0;
    }

    .app {
        display: flex;
        flex-direction: column;
        height: 100vh;
        overflow: hidden;
        background: #d6d6d6;
        color: #000;
        font: 12px/16px "Liberation Sans", "Noto Sans CJK SC", sans-serif;
    }

    .app * {
        box-sizing: border-box;
    }

    .defs {
        position: absolute;
        width: 0;
        height: 0;
    }

    button {
        padding: 0;
        border: 0;
        background: none;
        color: inherit;
        font: inherit;
        white-space: nowrap;
    }

    .icon {
        display: block;
        flex: none;
        width: 24px;
        height: 24px;
    }

    .titlebar {
        display: flex;
        flex: none;
        align-items: center;
        height: 26px;
        padding: 0 5px 0 2px;
        background: linear-gradient(#555 0, #888 1px, #444 4px, #333 12px, #161616 13px, #1c1c1c 25px, #444);
        color: #fff;
    }

    .titlebar > .icon {
        width: 18px;
        height: 18px;
        margin-right: 4px;
    }

    h1 {
        flex: 1;
        margin: 0;
        font: bold 14px/20px "Noto Sans CJK SC", sans-serif;
        white-space: pre;
    }

    h1 span {
        font: bold 13px/20px "Liberation Mono", monospace;
    }

    .titlebar strong {
        margin-right: 28px;
        font-size: 14px;
    }

    .winbtns {
        display: flex;
        gap: 5px;
    }

    .winbtns button {
        display: flex;
        justify-content: center;
        align-items: center;
        width: 18px;
        height: 18px;
        border: 1px solid #999;
        border-radius: 3px;
        background: #4a4a4a;
        font-size: 13px;
        line-height: 16px;
    }

    .winbtns .close {
        border-color: #f4b8a8;
        background: #e0533a;
    }

    .winbtns .min::before {
        content: "";
        width: 8px;
        height: 3px;
        margin-top: 8px;
        background: currentColor;
    }

    .restore i {
        width: 8px;
        height: 7px;
        margin: 2px 2px 0 0;
        border: 1px solid;
        border-top-width: 2px;
        box-shadow: 2px -2px 0 -1px #4a4a4a, 2px -2px 0 0 currentColor;
    }

    .winbtns.mdi {
        gap: 3px;
        margin-left: auto;
        color: #444;
    }

    .mdi button {
        width: 17px;
        height: 17px;
        border-color: #777;
        border-radius: 2px;
        background: #eee;
    }

    .mdi .restore i {
        box-shadow: 2px -2px 0 -1px #eee, 2px -2px 0 0 currentColor;
    }

    .menubar {
        display: flex;
        flex: none;
        align-items: center;
        gap: 10px;
        height: 27px;
        padding: 0 4px 0 1px;
        border-bottom: 1px solid #bcbcbc;
        background: #e4e4e4;
    }

    .menubar .grip {
        margin-right: -9px;
    }

    .menubar > .icon {
        width: 18px;
        height: 18px;
        margin-right: -6px;
    }

    .grip {
        flex: none;
        width: 3px;
        height: 20px;
        margin: 0 4px;
        background: repeating-linear-gradient(#999 0 1px, #f4f4f4 1px 3px);
    }

    .grip.first {
        margin: 0 1px 0 4px;
    }

    .toolbar {
        display: flex;
        flex: none;
        align-items: center;
        height: 34px;
        border-top: 1px solid #f4f4f4;
        background: linear-gradient(#dcdcdc, #d0d0d0);
    }

    .toolbar.second {
        height: 33px;
        border-bottom: 1px solid #a0a0a0;
    }

    .second .grip:first-child {
        margin: 0;
        margin-left: 4px;
    }

    .start-app {
        display: flex;
        flex: none;
        align-items: center;
        gap: 4px;
        width: 67px;
        padding-left: 3px;
    }

    .start-app i {
        border: 3px solid transparent;
        border-top-color: #222;
        border-bottom: 0;
    }

    .tool {
        display: flex;
        flex: none;
        justify-content: center;
        align-items: center;
        width: 31px;
        height: 30px;
        border: 1px solid transparent;
        border-radius: 2px;
    }

    .tool.pressed {
        border-color: #444;
        background: #fff;
    }

    .tool.hovered {
        border-color: #b5b5b5;
        background: #ececec;
    }

    .swatch {
        flex: none;
        width: 24px;
        height: 24px;
        border: 1px solid #222;
        border-top-width: 3px;
        background: #fff;
    }

    .sep {
        flex: none;
        align-self: stretch;
        width: 2px;
        margin: 0 2px;
        border-left: 1px solid #c2c2c2;
        border-right: 1px solid #eee;
    }

    .drop {
        display: flex;
        flex: none;
        flex-direction: column;
        justify-content: center;
        align-items: center;
        width: 12px;
        height: 30px;
    }

    .drop::after {
        content: "";
        border: 3px solid transparent;
        border-top-color: #111;
        border-bottom: 0;
    }

    .drop.low {
        justify-content: flex-end;
        padding-bottom: 5px;
    }

    .drop.wide {
        justify-content: space-between;
        width: 18px;
    }

    .drop.wide span {
        height: 14px;
        font: bold 16px/10px "Liberation Sans", sans-serif;
    }

    .selectbar {
        display: flex;
        flex: none;
        align-items: center;
        height: 32px;
        padding-left: 5px;
        background: linear-gradient(#c6c6c6, #dadada 10px, #d4d4d4);
    }

    .combo {
        position: relative;
        flex: none;
        width: 143px;
        height: 20px;
        margin-right: 8px;
    }

    .combo + .combo {
        width: 151px;
        margin-right: 4px;
    }

    .combo select {
        width: 100%;
        height: 20px;
        padding: 0 0 0 1px;
        border: 1px solid #555;
        border-radius: 3px;
        background: #fff;
        color: #000;
        font: 12px/16px "Noto Sans CJK SC", sans-serif;
        appearance: none;
    }

    .combo span {
        position: absolute;
        top: 1px;
        right: 1px;
        width: 16px;
        height: 18px;
        background: linear-gradient(#b9dcf8, #4fa0e4);
        pointer-events: none;
    }

    .combo span::after {
        content: "";
        position: absolute;
        top: 6px;
        left: 2px;
        border: 6px solid transparent;
        border-top: 7px solid #123;
        border-bottom: 0;
    }

    .selectbar .tool {
        width: 24px;
    }

    .selectbar .icon {
        width: 17px;
        height: 17px;
    }

    .selectbar .drop {
        width: 8px;
    }

    .selectbar .end {
        width: 18px;
        margin-left: auto;
    }

    .status {
        display: flex;
        flex: none;
        align-items: center;
        height: 20px;
        border-top: 1px solid #efefef;
        background: linear-gradient(#dedede, #d0d0d0);
        font: bold 13px/18px "Liberation Sans", "Noto Sans CJK SC", sans-serif;
    }

    .status p {
        width: 47%;
        margin: 0;
        padding-left: 2px;
        white-space: nowrap;
    }

    .status .message {
        flex: 1;
        align-self: stretch;
        border-left: 1px solid #f4f4f4;
        border-right: 1px solid #f4f4f4;
        box-shadow: -1px 0 #b8b8b8;
    }

    .status > span {
        align-self: stretch;
        width: 18px;
        border-right: 1px solid #f4f4f4;
    }

    .status button {
        display: flex;
        justify-content: center;
        align-items: center;
        width: 59px;
        height: 19px;
        padding-left: 37px;
    }

    .status .icon {
        width: 15px;
        height: 15px;
    }

    .strip {
        position: relative;
        flex: none;
        height: 18px;
        background: linear-gradient(#b4b4b4 0 1px, #c8c8c8 1px 5px, #8e8e8e 5px 6px, #d0d0d0 6px 9px, #f8f8f8 9px 11px, #c0c0c0 11px 15px, #666 15px 16px, #aaa 16px);
    }

    .scroller {
        position: absolute;
        z-index: 1;
        top: 2px;
        right: 0;
        display: flex;
        width: 118px;
        height: 22px;
        border: 1px solid #888;
    }

    .scroller span {
        flex: 1;
        background: linear-gradient(#4a4a4a 40%, #1a1a1a 45%);
    }

    .scroller button {
        display: flex;
        justify-content: center;
        align-items: center;
        width: 21px;
        background: #ececec;
    }

    .scroller svg {
        width: 11px;
        height: 11px;
        fill: none;
        stroke: #555;
        stroke-width: 2.5;
    }

    main {
        display: flex;
        flex: 1;
        min-height: 0;
    }

    aside {
        display: flex;
        flex: none;
        flex-direction: column;
        gap: 2px;
        width: 33px;
        padding: 15px 0 0 6px;
        border-right: 1px solid #888;
        background: linear-gradient(90deg, #b4b4b4, #a8a8a8);
    }

    aside button {
        display: flex;
        flex: none;
        align-items: center;
        height: 40px;
        border: 1px solid #777;
        border-right: 0;
        border-radius: 3px 0 0 3px;
        background: #dcdcdc;
        box-shadow: inset 1px 1px #f8f8f8;
    }

    aside button.spaced {
        margin-top: 12px;
    }

    .divider {
        flex: none;
        width: 11px;
        border-right: 1px solid #777;
        background: linear-gradient(90deg, #fafafa 5px, #e0e0e0 5px 7px, #f4f4f4 7px);
    }

    .view {
        flex: 1;
        min-width: 0;
        background: linear-gradient(#b5b5b5, #cacaca 28%, #dadada 60%, #e6e6e6 78%);
    }

    .view svg {
        display: block;
        width: 100%;
        height: 100%;
    }

    .axis {
        fill: #8a6a48;
        font: 11px "DejaVu Sans", sans-serif;
    }

    .syncbar {
        position: relative;
        display: flex;
        flex: none;
        align-items: center;
        height: 37px;
        padding-left: 367px;
        border-top: 1px solid #f8f8f8;
        background: linear-gradient(#dedede, #cecece);
    }

    .syncbar .grip {
        margin: 0 1px 0 3px;
    }

    .cursor {
        position: absolute;
        top: 23px;
        left: 604px;
        width: 12px;
        height: 20px;
    }

    footer {
        display: flex;
        flex: none;
        align-items: stretch;
        height: 33px;
        padding-top: 4px;
        background: linear-gradient(#3a78dc 0, #4b92f0 3px, #2a62dc 8px, #245edb 28px, #1a46b0);
        color: #fff;
    }

    .start {
        display: flex;
        align-items: center;
        gap: 5px;
        width: 96px;
        padding-left: 9px;
        border-radius: 0 8px 8px 0;
        background: linear-gradient(#6ab868, #3a9a3a 5px, #2f8a30 22px, #226a24);
        box-shadow: inset -2px -1px 3px #1c5a20;
        font: italic 18px/24px "Noto Sans CJK SC", sans-serif;
    }

    .start .icon {
        width: 21px;
        height: 21px;
    }

    .quick {
        display: flex;
        align-items: center;
        gap: 6px;
        width: 122px;
        padding-left: 8px;
    }

    .quick .icon {
        width: 17px;
        height: 17px;
    }

    .quick b {
        align-self: flex-start;
        margin-left: 4px;
        font-size: 14px;
        line-height: 16px;
        font-weight: 400;
    }

    .quick .grip {
        margin: 0 2px;
        background: repeating-linear-gradient(#1c46a8 0 1px, #3f7ae8 1px 3px);
    }

    .task {
        display: flex;
        align-items: center;
        width: 159px;
        margin-right: 2px;
        padding-left: 9px;
        border-radius: 3px;
        background: linear-gradient(#5a96f6, #3f7ff0 6px, #3a78ea);
        font: 12px/16px "Noto Sans CJK SC", sans-serif;
        white-space: pre;
    }

    .task.active {
        background: linear-gradient(#173f94, #1e50b4 6px, #2052b8);
    }

    .task .icon {
        width: 17px;
        height: 17px;
        margin-right: 4px;
    }

    .task span {
        font: 10px/16px "Liberation Mono", monospace;
    }

    .tray {
        position: relative;
        display: flex;
        align-items: center;
        gap: 4px;
        width: 167px;
        margin: -2px 0 0 auto;
        padding-left: 14px;
        border-left: 1px solid #0e3c94;
        background: linear-gradient(#32a8f0, #1590e4 6px, #1088dc 26px, #0c6cc0);
    }

    .tray i {
        width: 15px;
        height: 15px;
        border-radius: 8px;
        background: #2d5fa8;
    }

    .tray .dark {
        background: #2a2a32;
    }

    .tray .gray {
        background: #5d7c94;
    }

    .tray .green {
        background: #8ac83c;
    }

    .tray time {
        font-size: 12px;
        opacity: 0.7;
    }

    .watermark {
        position: absolute;
        right: 17px;
        bottom: 2px;
        color: #e02a2a;
        font: bold 18px/20px "Noto Sans CJK SC", sans-serif;
        white-space: nowrap;
        text-shadow: 1px 0 #fff, -1px 0 #fff, 0 1px #fff, 0 -1px #fff;
    }

    .watermark span {
        font: 18px/20px "DejaVu Sans", sans-serif;
    }
</style>
